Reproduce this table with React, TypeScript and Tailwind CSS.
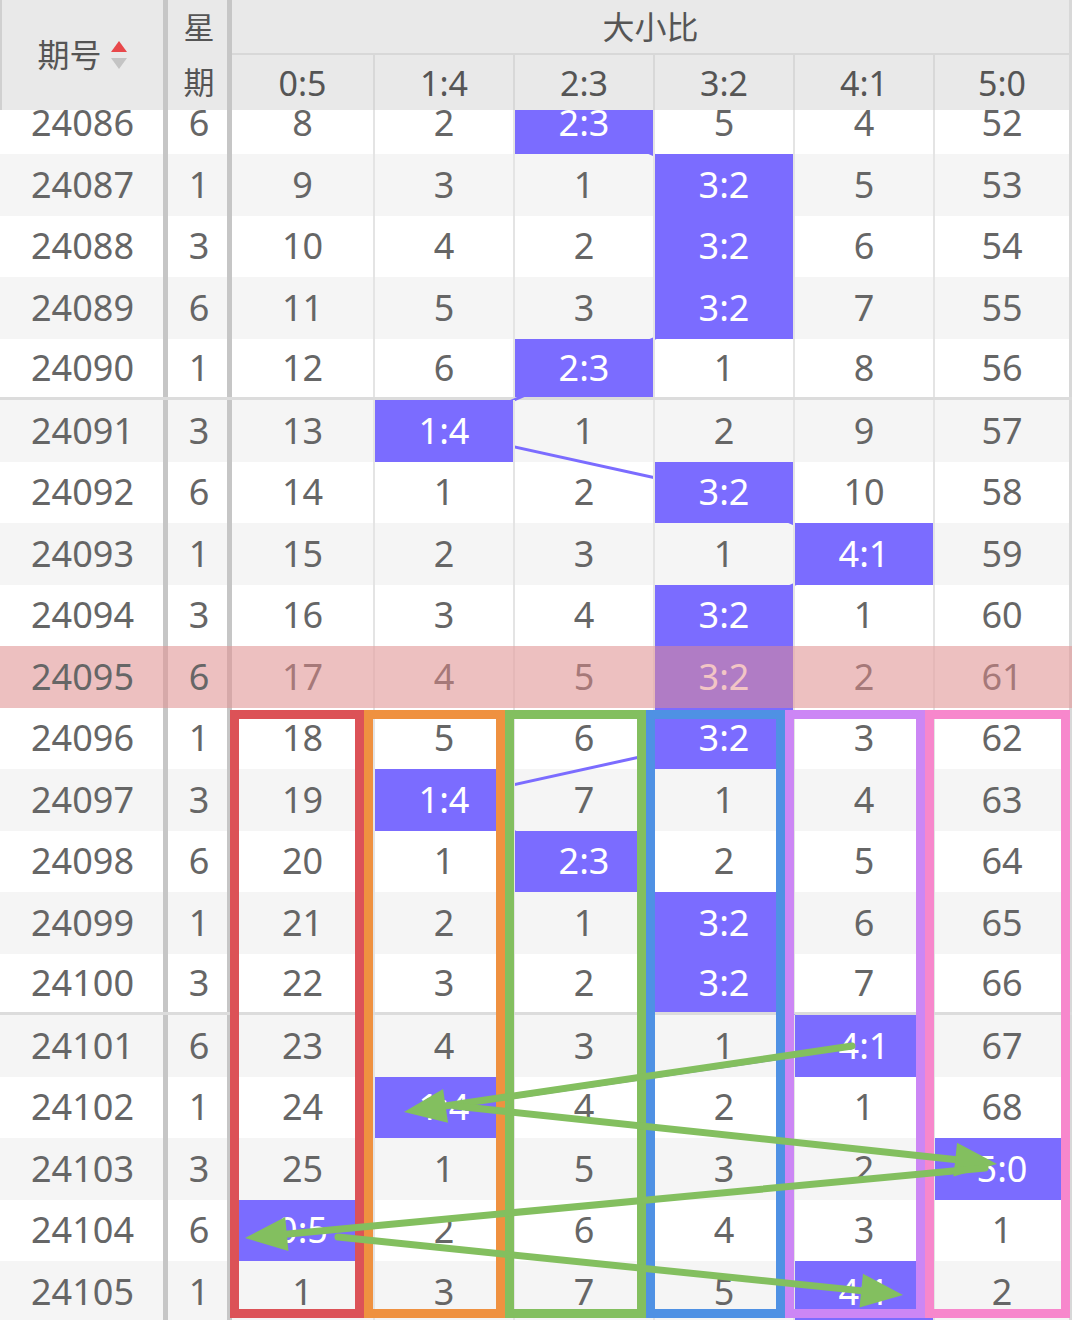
import React from "react";

const LABELS = ["0:5", "1:4", "2:3", "3:2", "4:1", "5:0"];
const COL_W = [141, 140, 140, 140, 140, 139];
const COL_X = [232, 373, 513, 653, 793, 933];
const ROW_H = 61.5;

type Row = { id: string; week: number; hit: number; vals: (number | null)[] };

const rows: Row[] = [
  { id: "24086", week: 6, hit: 2, vals: [8, 2, null, 5, 4, 52] },
  { id: "24087", week: 1, hit: 3, vals: [9, 3, 1, null, 5, 53] },
  { id: "24088", week: 3, hit: 3, vals: [10, 4, 2, null, 6, 54] },
  { id: "24089", week: 6, hit: 3, vals: [11, 5, 3, null, 7, 55] },
  { id: "24090", week: 1, hit: 2, vals: [12, 6, null, 1, 8, 56] },
  { id: "24091", week: 3, hit: 1, vals: [13, null, 1, 2, 9, 57] },
  { id: "24092", week: 6, hit: 3, vals: [14, 1, 2, null, 10, 58] },
  { id: "24093", week: 1, hit: 4, vals: [15, 2, 3, 1, null, 59] },
  { id: "24094", week: 3, hit: 3, vals: [16, 3, 4, null, 1, 60] },
  { id: "24095", week: 6, hit: 3, vals: [17, 4, 5, null, 2, 61] },
  { id: "24096", week: 1, hit: 3, vals: [18, 5, 6, null, 3, 62] },
  { id: "24097", week: 3, hit: 1, vals: [19, null, 7, 1, 4, 63] },
  { id: "24098", week: 6, hit: 2, vals: [20, 1, null, 2, 5, 64] },
  { id: "24099", week: 1, hit: 3, vals: [21, 2, 1, null, 6, 65] },
  { id: "24100", week: 3, hit: 3, vals: [22, 3, 2, null, 7, 66] },
  { id: "24101", week: 6, hit: 4, vals: [23, 4, 3, 1, null, 67] },
  { id: "24102", week: 1, hit: 1, vals: [24, null, 4, 2, 1, 68] },
  { id: "24103", week: 3, hit: 5, vals: [25, 1, 5, 3, 2, null] },
  { id: "24104", week: 6, hit: 0, vals: [null, 2, 6, 4, 3, 1] },
  { id: "24105", week: 1, hit: 4, vals: [1, 3, 7, 5, null, 2] },
];

// marked-up boxes round the last ten draws
const boxes = [
  { left: 230, width: 134, cls: "border-[#dc5257]" },
  { left: 364, width: 141, cls: "border-[#ef9140]" },
  { left: 505, width: 141, cls: "border-[#83bf5f]" },
  { left: 646, width: 139, cls: "border-[#4f91e4]" },
  { left: 785, width: 140, cls: "border-[#cc86f5]" },
  { left: 925, width: 145, cls: "border-[#f787cc]" },
];

const arrows: [number, number, number, number][] = [
  [852, 1046, 404, 1112],
  [455, 1106, 997, 1164],
  [985, 1168, 245, 1238],
  [338, 1237, 903, 1295],
];

function Arrow({ a }: { a: [number, number, number, number] }) {
  const [x1, y1, x2, y2] = a;
  const dx = x2 - x1;
  const dy = y2 - y1;
  const len = Math.hypot(dx, dy);
  const ux = dx / len;
  const uy = dy / len;
  const L = 42;
  const W = 17;
  const bx = x2 - ux * L;
  const by = y2 - uy * L;
  const pts = `${x2},${y2} ${bx - uy * W},${by + ux * W} ${bx + uy * W},${by - ux * W}`;
  return (
    <g>
      <line x1={x1} y1={y1} x2={bx + ux * 4} y2={by + uy * 4} stroke="#83bf5f" strokeWidth={7} strokeLinecap="round" />
      <polygon points={pts} fill="#83bf5f" />
    </g>
  );
}

function SortIcon() {
  return (
    <svg width="18" height="32" viewBox="0 0 18 32">
      <polygon points="9,2 17,13 1,13" fill="#e8484b" />
      <polygon points="9,30 17,19 1,19" fill="#c4c4c4" />
    </svg>
  );
}

export default function App() {
  // trend line stops where the green arrows take over
  const centers = rows.slice(0, 17).map((r, i) => ({
    x: COL_X[r.hit] + COL_W[r.hit] / 2,
    y: ROW_H * i + ROW_H / 2,
  }));

  return (
    <div
      className="relative w-[1072px] h-[1320px] overflow-hidden bg-white text-[#666]"
      style={{ fontFamily: '"Noto Sans", "Noto Sans CJK SC", sans-serif' }}
    >
      {/* Header */}
      <div className="relative z-40 flex h-[110px] bg-[#e9e9e9] text-[#555]">
        <div className="flex w-[163px] items-center justify-center gap-2 border-l-2 border-[#d0d0d0]">
          <span className="text-[32px] leading-none">期号</span>
          <SortIcon />
        </div>
        <div className="w-[5px] bg-[#c6c6c6]" />
        <div className="flex w-[59px] flex-col pl-[3px] text-[31px] leading-none">
          <div className="flex h-[55px] items-center justify-center">星</div>
          <div className="flex h-[55px] items-center justify-center">期</div>
        </div>
        <div className="w-[5px] bg-[#c6c6c6]" />
        <div className="flex flex-1 flex-col">
          <div className="flex h-[55px] items-center justify-center border-b-2 border-[#d8d8d8] border-r-[3px] text-[32px] leading-none">
            大小比
          </div>
          <div className="flex h-[55px]">
            {LABELS.map((l, c) => (
              <div
                key={l}
                style={{ width: COL_W[c] }}
                className={`flex items-center justify-center text-[34px] leading-none ${c > 0 ? "border-l-2 border-[#d8d8d8]" : ""} ${c === 5 ? "border-r-[3px] border-[#d8d8d8]" : ""}`}
              >
                {l}
              </div>
            ))}
          </div>
        </div>
      </div>

      {/* Body */}
      <div className="relative -mt-[17.5px]">
        {rows.map((r, i) => {
          const sep = i === 4 || i === 14;
          return (
            <div
              key={r.id}
              className={`flex h-[61.5px] text-[36px] leading-none ${i % 2 === 1 ? "bg-[#f5f5f5]" : "bg-white"} ${sep ? "border-b-[3px] border-[#dcdcdc]" : ""}`}
            >
              <div className="relative z-30 flex w-[163px] items-center justify-center pl-[2px]">{r.id}</div>
              <div className="w-[5px] bg-[#c6c6c6]" />
              <div className="relative z-30 flex w-[59px] items-center justify-center pl-[3px]">{r.week}</div>
              <div className="w-[5px] bg-[#c6c6c6]" />
              {r.vals.map((v, c) => {
                const hit = c === r.hit;
                return (
                  <div
                    key={c}
                    style={{ width: COL_W[c] }}
                    className={`relative z-10 flex items-center justify-center ${c > 0 ? "border-l-2 border-[#e4e4e4]" : ""} ${c === 5 ? "border-r-[3px] border-r-[#d8d8d8]" : ""} ${hit ? "bg-[#7b6cff] text-white" : ""}`}
                  >
                    {hit ? LABELS[c] : v}
                  </div>
                );
              })}
            </div>
          );
        })}

        {/* trend line under the cells */}
        <svg className="pointer-events-none absolute left-0 top-0 z-[5]" width="1072" height={ROW_H * rows.length}>
          <polyline
            points={centers.map((p) => `${p.x},${p.y}`).join(" ")}
            fill="none"
            stroke="#7b6cff"
            strokeWidth={3}
          />
        </svg>

        {/* current draw highlight */}
        <div className="pointer-events-none absolute left-0 z-20 h-[61.5px] w-full bg-[rgba(230,140,140,0.5)]" style={{ top: ROW_H * 9 }} />
      </div>

      {/* coloured column boxes */}
      {boxes.map((b) => (
        <div
          key={b.left}
          className={`pointer-events-none absolute top-[710px] z-30 h-[608px] border-[9px] ${b.cls}`}
          style={{ left: b.left, width: b.width }}
        />
      ))}

      {/* green arrows */}
      <svg className="pointer-events-none absolute left-0 top-0 z-50" width="1072" height="1320">
        {arrows.map((a, i) => (
          <Arrow key={i} a={a} />
        ))}
      </svg>
    </div>
  );
}
